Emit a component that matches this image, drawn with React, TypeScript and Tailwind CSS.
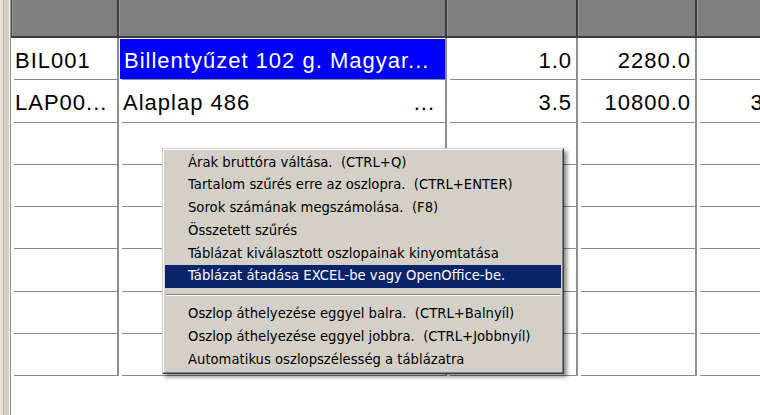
const columns = [
  { width: "w-[108px]" },
  { width: "w-[328px]" },
  { width: "w-[131px]" },
  { width: "w-[119px]" },
  { width: "w-[146px]" },
];

const rows: { text: string; align: "left" | "right" | "split"; selected?: boolean }[][] = [
  [
    { text: "BIL001", align: "left" },
    { text: "Billentyűzet 102 g. Magyar...", align: "left", selected: true },
    { text: "1.0", align: "right" },
    { text: "2280.0", align: "right" },
    { text: "", align: "right" },
  ],
  [
    { text: "LAP00...", align: "left" },
    { text: "Alaplap 486", align: "split" },
    { text: "3.5", align: "right" },
    { text: "10800.0", align: "right" },
    { text: "36000.0", align: "right" },
  ],
];

const emptyRows = 6;

const menuItems: (string | null)[] = [
  "Árak bruttóra váltása.  (CTRL+Q)",
  "Tartalom szűrés erre az oszlopra.  (CTRL+ENTER)",
  "Sorok számának megszámolása.  (F8)",
  "Összetett szűrés",
  "Táblázat kiválasztott oszlopainak kinyomtatása",
  "Táblázat átadása EXCEL-be vagy OpenOffice-be.",
  null,
  "Oszlop áthelyezése eggyel balra.  (CTRL+Balnyíl)",
  "Oszlop áthelyezése eggyel jobbra.  (CTRL+Jobbnyíl)",
  "Automatikus oszlopszélesség a táblázatra",
];

const highlighted = 5;

function Cell({
  width,
  text,
  align,
  selected,
}: {
  width: string;
  text: string;
  align: "left" | "right" | "split";
  selected?: boolean;
}) {
  return (
    <div className={`${width} flex h-[42.3px] shrink-0 flex-col border-r-2 border-[#8e8e8e]`}>
      <div
        className={`flex min-h-0 flex-1 items-center overflow-hidden whitespace-nowrap px-[4px] pt-[3px] ${
          selected ? "mt-px ml-[1px] bg-[#0000ff] text-white" : "text-black"
        } ${align === "right" ? "justify-end" : align === "split" ? "justify-between" : "justify-start"}`}
      >
        <span>{text}</span>
        {align === "split" && <span className="pr-[6px]">...</span>}
      </div>
      <div className="ml-[3px] h-px bg-[#8a8a8a]" />
    </div>
  );
}

export default function App() {
  return (
    <div className="relative flex h-[415px] w-[760px] overflow-hidden bg-white font-['Liberation_Sans',Arial,sans-serif] text-[22px] tracking-[1px]">
      <div className="flex h-full w-[11px] shrink-0">
        <div className="w-[3px] bg-[#e4e1da]" />
        <div className="w-px bg-[#bdb9b0]" />
        <div className="w-[5px] bg-[#d4d0c8]" />
        <div className="w-px bg-[#f4f2ee]" />
        <div className="w-px bg-[#9a968f]" />
      </div>

      <div className="flex min-w-0 flex-col">
        <div className="flex h-[38px] shrink-0 border-b-2 border-[#3c3c3c] bg-[#7f7f7f]">
          {columns.map((c, i) => (
            <div
              key={i}
              className={`${c.width} h-full shrink-0 border-r-2 border-[#3c3c3c] ${i === 0 ? "border-l border-l-[#4a4a4a]" : ""}`}
            >
              <div className="h-full border-l border-[#9a9a9a]" />
            </div>
          ))}
        </div>

        {rows.map((r, ri) => (
          <div key={ri} className="flex">
            {r.map((cell, ci) => (
              <Cell key={ci} width={columns[ci].width} {...cell} />
            ))}
          </div>
        ))}
        {Array.from({ length: emptyRows }).map((_, ri) => (
          <div key={`e${ri}`} className="flex">
            {columns.map((c, ci) => (
              <Cell key={ci} width={c.width} text="" align="left" />
            ))}
          </div>
        ))}
      </div>

      <div className="absolute top-[148px] left-[162px] w-[402px] border border-t-[#d4d0c8] border-l-[#d4d0c8] border-r-[#404040] border-b-[#404040] bg-[#d4d0c8] font-['DejaVu_Sans',Tahoma,sans-serif] text-[13.2px] tracking-normal text-black shadow-[3px_3px_4px_rgba(0,0,0,0.45)]">
        <div className="border border-t-white border-l-white border-r-[#808080] border-b-[#808080] p-px">
          {menuItems.map((item, i) =>
            item === null ? (
              <div key={i} className="flex h-[15px] flex-col justify-center px-px">
                <div className="h-px bg-[#808080]" />
                <div className="h-px bg-white" />
              </div>
            ) : (
              <div
                key={i}
                className={`flex h-[22.8px] items-center whitespace-pre pl-[23px] ${
                  i === highlighted ? "bg-[#0a246a] text-white" : ""
                }`}
              >
                {item}
              </div>
            ),
          )}
        </div>
      </div>
    </div>
  );
}
